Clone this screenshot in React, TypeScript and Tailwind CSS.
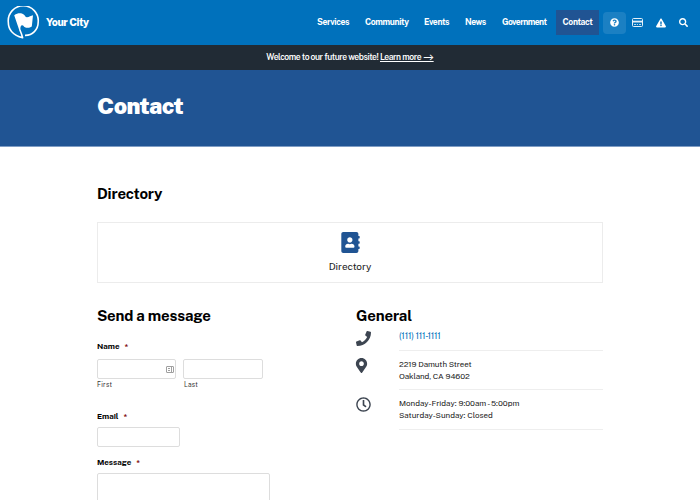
import { FaAddressBook, FaExclamationTriangle, FaMapMarkerAlt, FaPhone, FaQuestionCircle, FaRegClock, FaSearch } from "react-icons/fa";

function Logo() {
  return (
    <svg className="h-[33px] w-[33px]" viewBox="0 0 33 33" fill="none">
      <path d="M18 29.4C25.5 29.6 31.2 23.5 31.2 16A15 15 0 1 0 1.3 16C1.3 24 7 29.5 15.6 31.7C14.8 28.5 13.8 26 12.9 24" stroke="white" strokeWidth="1.6" strokeLinejoin="round" />
      <path d="M7.2 9.2C11 6.6 14.5 7 16.7 8.5C18.1 9.5 18.3 11.2 20 11.2C22 11.2 24 9.6 26 9.3L24.8 20.5C22.5 22.3 19.5 22.2 17.5 20.9C16.5 20.2 16.3 19 14.9 19.2C13.6 19.6 13 21.5 13.6 24.5H12.4Z" fill="white" />
    </svg>
  );
}

function CardIcon() {
  return (
    <svg className="h-[9px] w-[11px]" viewBox="0 0 11 9" fill="none">
      <rect x=".5" y=".5" width="10" height="8" rx="1" stroke="#e6f1f8" />
      <path d="M.5 3.6H10.5" stroke="#e6f1f8" strokeWidth="1.8" />
      <path d="M2 6.5H4M4.8 6.5H6M7 6.5H9" stroke="#e6f1f8" strokeWidth=".8" />
    </svg>
  );
}

function Label({ text, className }: { text: string; className: string }) {
  return (
    <div className={"flex h-3 items-center text-[8px] font-bold whitespace-nowrap " + className}>
      {text}
      <span className="ml-[5px] text-[#790000]">*</span>
    </div>
  );
}

export default function App() {
  return (
    <div className="h-[500px] w-[700px] overflow-hidden bg-white font-['Public_Sans',Inter,sans-serif] text-black">
      <header className="flex h-[45px] items-center bg-[#0071bc] pl-[7px] text-white">
        <Logo />
        <span className="ml-[6px] text-[10.5px] font-extrabold tracking-[-0.4px] whitespace-nowrap">Your City</span>
        <nav className="ml-auto flex items-center text-[8.5px] font-bold tracking-[-0.36px] whitespace-nowrap">
          <span className="w-[48px]">Services</span>
          <span className="w-[59px]">Community</span>
          <span className="w-[41px]">Events</span>
          <span className="w-[37px]">News</span>
          <span className="w-[54px] tracking-[-0.55px]">Government</span>
          <span className="flex h-[25px] w-[43px] items-center justify-center bg-[#205493]">Contact</span>
        </nav>
        <div className="ml-1 flex items-center pr-[6px]">
          <span className="flex h-[22px] w-[23px] items-center justify-center rounded bg-[#1b80c3]"><FaQuestionCircle size={9} /></span>
          <span className="flex w-[23px] justify-center"><CardIcon /></span>
          <span className="flex w-[23px] justify-center"><FaExclamationTriangle size={10} /></span>
          <span className="flex w-[22px] justify-center"><FaSearch size={9} /></span>
        </div>
      </header>
      <div className="flex h-[25px] items-center justify-center bg-[#212b35] pb-px text-[8.5px] font-semibold tracking-[-0.42px] whitespace-nowrap text-white">
        Welcome to our future website!&nbsp;<a className="underline">Learn more ⟶</a>
      </div>
      <div className="h-[77px] border-b border-[#7f9dc4] bg-[#205493] pt-[20px] pl-[97px]">
        <h1 className="text-[23px] leading-8 font-black tracking-[-0.6px] text-white">Contact</h1>
      </div>
      <main className="pr-[97px] pl-[97px]">
        <h2 className="pt-[37px] text-[15px] leading-[20px] font-bold tracking-[-0.2px]">Directory</h2>
        <div className="mt-[18px] flex h-[61px] flex-col items-center border border-[#ececec] pt-[9px]">
          <FaAddressBook size={21} className="text-[#205493]" />
          <span className="mt-[6px] text-[10px] leading-[14px] tracking-[-0.05px] text-[#212121]">Directory</span>
        </div>
        <div className="mt-[23px] flex">
          <section className="w-[259px] shrink-0">
            <h2 className="text-[15px] leading-[20px] font-bold tracking-[-0.2px]">Send a message</h2>
            <Label text="Name" className="mt-[14px]" />
            <div className="mt-[7px] flex gap-[7px]">
              <div className="flex h-[20px] w-[79px] items-center justify-end rounded-[2px] border border-[#ddd] pr-[1px]">
                <svg className="h-[7px] w-[8px]" viewBox="0 0 8 7" fill="none" stroke="#888"><rect x=".5" y=".5" width="7" height="6" rx=".5" strokeWidth=".8" /><path d="M2 2.5H4M2 4.5H4M5.5 1V6" strokeWidth=".8" /></svg>
              </div>
              <div className="h-[20px] w-[80px] rounded-[2px] border border-[#ddd]" />
            </div>
            <div className="flex h-[10px] items-center pt-px text-[6.5px] tracking-[0.3px] text-[#333]">
              <span className="w-[87px]">First</span><span>Last</span>
            </div>
            <Label text="Email" className="mt-[21px]" />
            <div className="mt-[5px] h-[20px] w-[83px] rounded-[2px] border border-[#ddd]" />
            <Label text="Message" className="mt-[9px]" />
            <div className="mt-[5px] h-[60px] w-[173px] rounded-[2px] border border-[#ddd]" />
          </section>
          <section className="grow">
            <h2 className="text-[15px] leading-[20px] font-bold tracking-[-0.15px]">General</h2>
            <div className="flex h-[25px] text-[8px] leading-[12px] text-[#212121]">
              <div className="w-[43px] pt-[5px]"><FaPhone size={15} className="text-[#3d4551]" /></div>
              <div className="grow border-b border-[#eee] pt-[4px] text-[8.5px] tracking-[-0.2px] text-[#0071bc]">(111) 111-1111</div>
            </div>
            <div className="flex h-[39px] text-[8px] leading-[12px] text-[#212121]">
              <div className="w-[43px] pt-[7px]"><FaMapMarkerAlt size={15} className="-ml-[2px] text-[#3d4551]" /></div>
              <div className="grow border-b border-[#eee] pt-[7px] tracking-[-0.1px]">2219 Damuth Street<br />Oakland, CA 94602</div>
            </div>
            <div className="flex h-[40px] text-[8px] leading-[12px] text-[#212121]">
              <div className="w-[43px] pt-[7px]"><FaRegClock size={15} className="text-[#3d4551]" /></div>
              <div className="grow border-b border-[#eee] pt-[7px]">Monday-Friday: 9:00am - 5:00pm<br />Saturday-Sunday: Closed</div>
            </div>
          </section>
        </div>
      </main>
    </div>
  );
}
